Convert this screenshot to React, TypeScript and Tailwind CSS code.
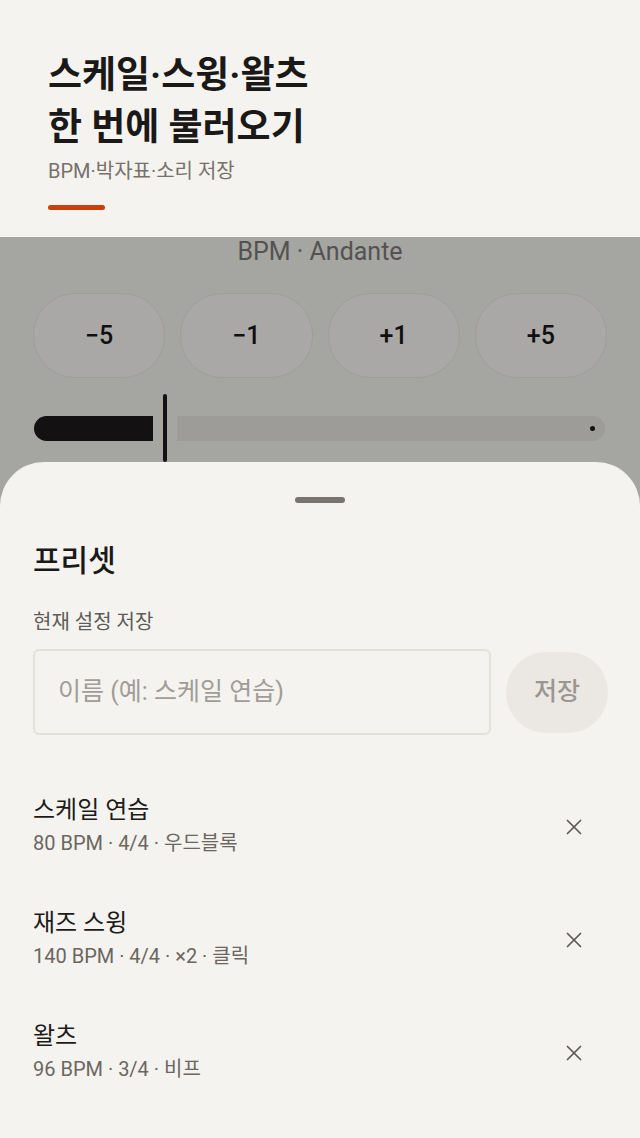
import { X } from 'lucide-react'

const PRESETS = [
  { name: '스케일 연습', meta: '80 BPM · 4/4 · 우드블록' },
  { name: '재즈 스윙', meta: '140 BPM · 4/4 · ×2 · 클릭' },
  { name: '왈츠', meta: '96 BPM · 3/4 · 비프' },
]

const STEPS = ['−5', '−1', '+1', '+5']

export default function App() {
  return (
    <div className="relative w-full h-[1138px] overflow-hidden bg-[#f4f3ef] font-['Roboto','Noto_Sans_CJK_KR',sans-serif]">
      {/* header */}
      <header className="h-[237px] px-12 pt-[50px]">
        <h1 className="text-[37px] leading-[52px] font-bold text-[#1b1918]">
          스케일·스윙·왈츠
          <br />
          한 번에 불러오기
        </h1>
        <p className="mt-[4px] text-[20px] leading-[27px] text-[#77716c]">BPM·박자표·소리 저장</p>
        <div className="mt-[20px] w-[57px] h-[5px] rounded-full bg-[#c8400c]" />
      </header>

      {/* tempo content, behind the scrim */}
      <section className="relative px-[33px]">
        <p className="text-center text-[25px] leading-[30px] text-[#7d7a77]">BPM · Andante</p>
        <div className="mt-[26px] grid grid-cols-4 gap-[15px]">
          {STEPS.map((s) => (
            <div
              key={s}
              className="h-[85px] rounded-[42px] border border-[#ebe8e3] bg-[#f9f8f5] flex items-center justify-center text-[25px] font-medium text-[#1a1817]"
            >
              {s}
            </div>
          ))}
        </div>
        <div className="mt-[16px] h-[68px] flex items-center">
          <div className="ml-[1px] w-[119px] h-[25px] rounded-l-full rounded-r-[4px] bg-[#1d1a1a]" />
          <div className="ml-[10px] w-[4px] h-[68px] rounded-full bg-[#1d1a1a]" />
          <div className="ml-[10px] mr-[2px] flex-1 h-[25px] rounded-r-full rounded-l-[4px] bg-[#e9e6e0] flex items-center justify-end pr-[10px]">
            <div className="w-[5px] h-[5px] rounded-full bg-[#1d1a1a]" />
          </div>
        </div>
      </section>

      {/* scrim */}
      <div className="absolute left-0 right-0 top-[237px] bottom-0 bg-black/[0.32]" />

      {/* bottom sheet */}
      <div className="absolute left-0 right-0 top-[462px] bottom-0 rounded-t-[44px] bg-[#f4f3ef] px-[33px]">
        <div className="mx-auto mt-[35px] w-[50px] h-[6px] rounded-full bg-[#79746f]" />
        <h2 className="mt-[38px] text-[30px] leading-[40px] font-medium text-[#1b1918]">프리셋</h2>
        <p className="mt-[28px] text-[20px] leading-[26px] text-[#5f5b57]">현재 설정 저장</p>
        <div className="mt-[14px] flex items-center gap-[15px]">
          <div className="flex-1 h-[86px] rounded-[6px] border-2 border-[#e4e1dc] flex items-center px-[23px] text-[25px] text-[#a19c97]">
            이름 (예: 스케일 연습)
          </div>
          <div className="mr-[-1px] w-[102px] h-[81px] rounded-[40px] bg-[#ebe8e4] flex items-center justify-center text-[25px] font-medium text-[#9b9691]">
            저장
          </div>
        </div>
        <ul className="mt-[43px]">
          {PRESETS.map((p) => (
            <li key={p.name} className="h-[113px] pt-[17px] flex items-start">
              <div className="flex-1">
                <p className="text-[24px] leading-[30px] text-[#1d1b1a]">{p.name}</p>
                <p className="mt-[6px] text-[20px] leading-[24px] text-[#6b6661]">{p.meta}</p>
              </div>
              <div className="mt-[8px] mr-[9px] w-12 h-12 flex items-center justify-center text-[#5f5b57]">
                <X size={26} strokeWidth={1.6} />
              </div>
            </li>
          ))}
        </ul>
      </div>
    </div>
  )
}
